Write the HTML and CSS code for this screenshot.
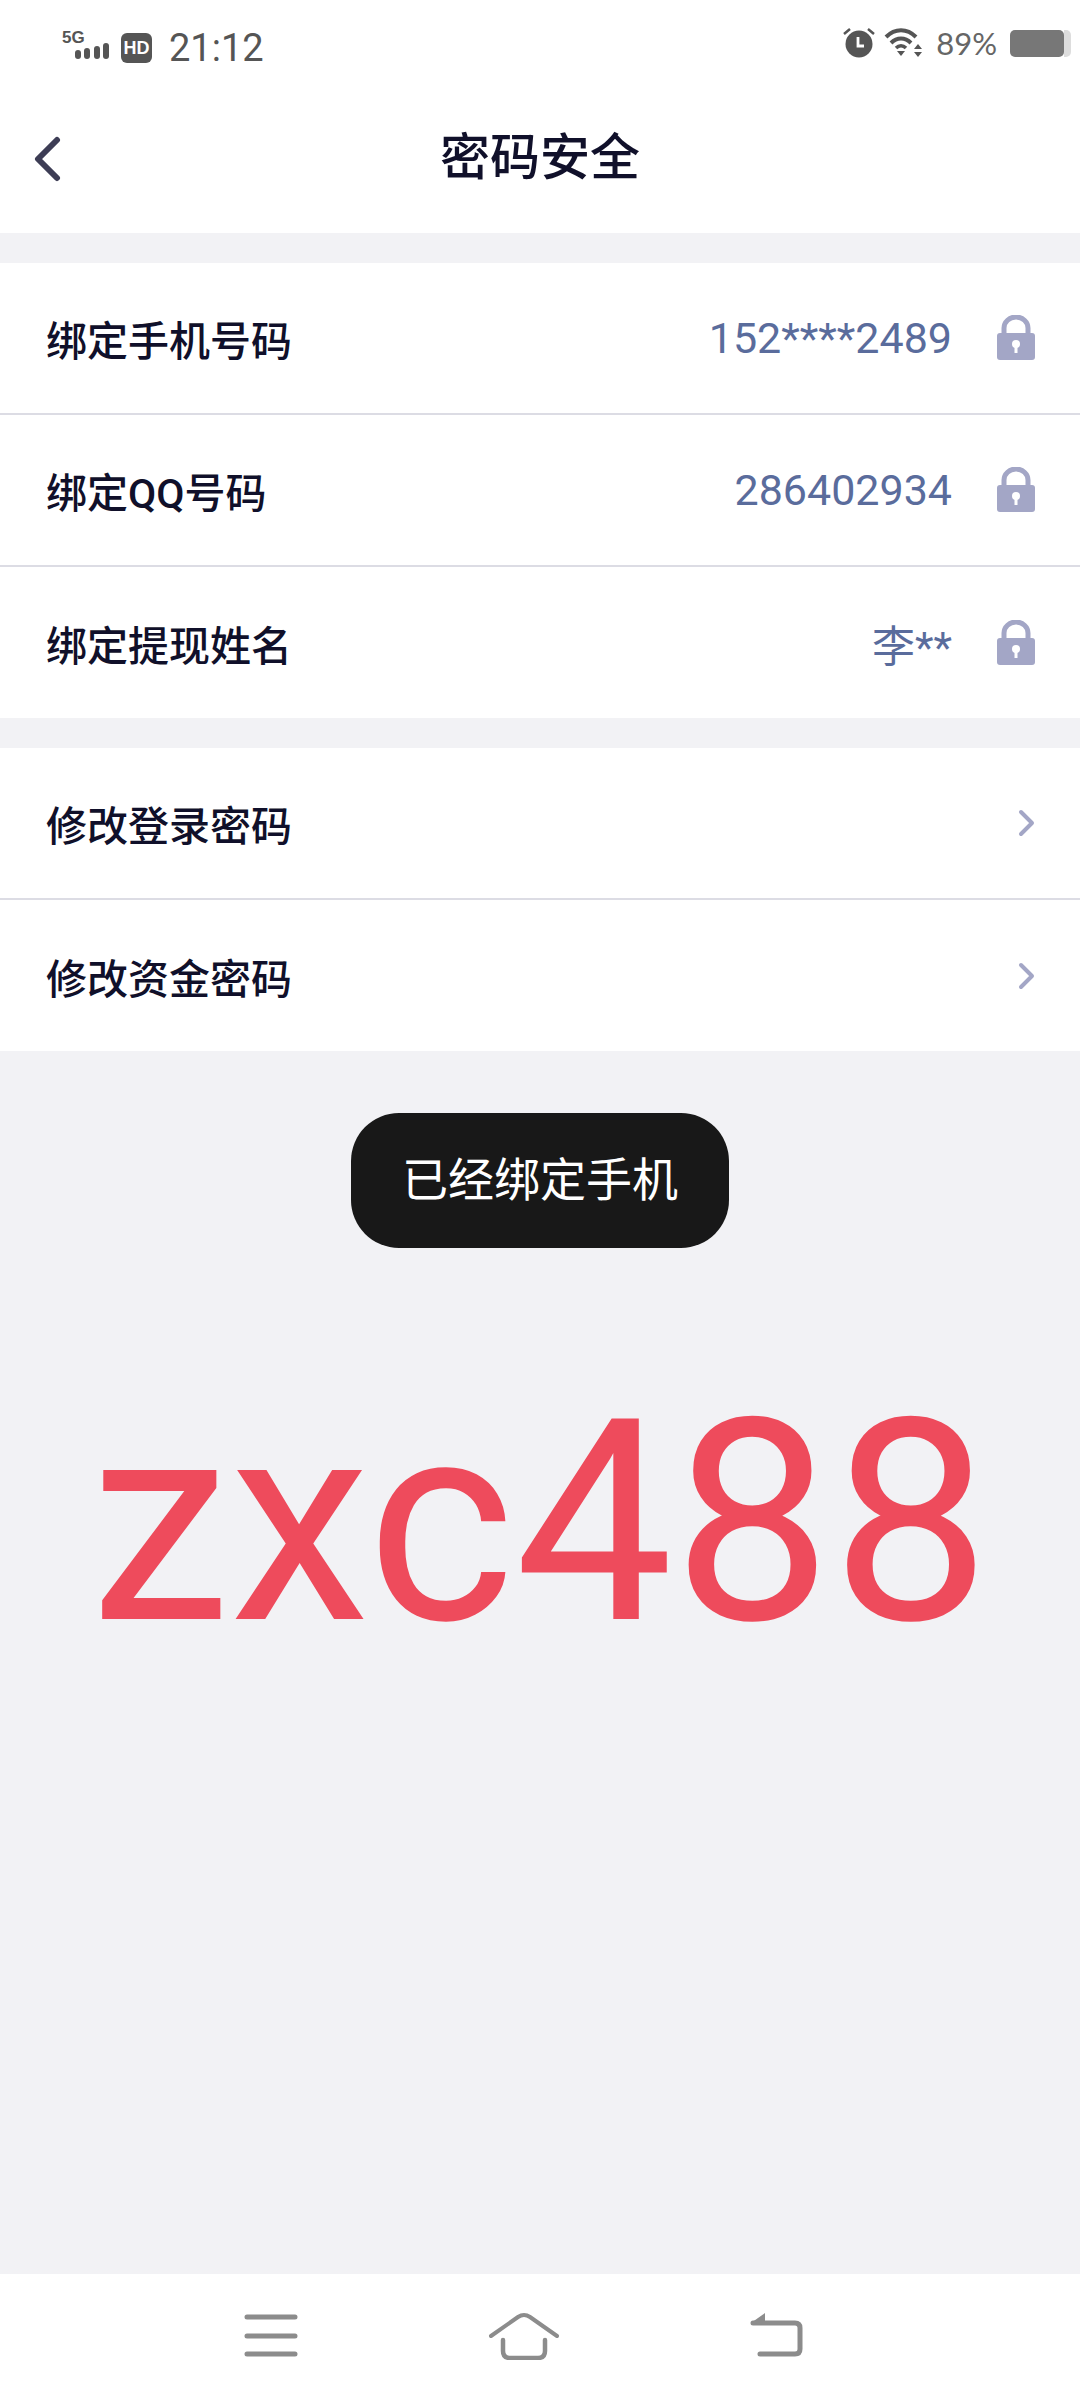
FILE: index.html
```html
<!DOCTYPE html>
<html lang="zh-CN">
<head>
    <meta charset="UTF-8">
    <meta name="viewport" content="width=device-width, initial-scale=1.0">
    <title>密码安全</title>
    <link rel="stylesheet" href="styles.css">
</head>
<body>
    <svg class="defs" width="0" height="0">
        <symbol id="lock" viewBox="0 0 40 46">
            <path d="M8 20V13a12 11 0 0 1 24 0V20" fill="none" stroke="#a3a6c6" stroke-width="5"/>
            <rect x="1" y="18" width="38" height="27" rx="3" fill="#a3a6c6"/>
            <circle cx="20" cy="29" r="4" fill="#fff"/>
            <rect x="18.5" y="30" width="3" height="8" fill="#fff"/>
        </symbol>
        <symbol id="arrow" viewBox="0 0 18 28">
            <path d="M3 3L14 14L3 25" fill="none" stroke="#a3a6c6" stroke-width="4" stroke-linecap="round" stroke-linejoin="round"/>
        </symbol>
    </svg>

    <header class="top">
        <div class="status">
            <div class="status-left">
                <svg class="signal" width="48" height="34" viewBox="0 0 48 34">
                    <text x="0" y="15" class="signal-text">5G</text>
                    <rect x="13" y="22" width="6" height="9" rx="3" fill="#555"/>
                    <rect x="22" y="20" width="6" height="11" rx="3" fill="#555"/>
                    <rect x="32" y="18" width="6" height="13" rx="3" fill="#555"/>
                    <rect x="41" y="15" width="6" height="16" rx="3" fill="#555"/>
                </svg>
                <span class="hd">HD</span>
                <span class="time">21:12</span>
            </div>
            <div class="status-right">
                <svg width="32" height="30" viewBox="0 0 32 30">
                    <path d="M1 6L7 1M31 6L25 1" stroke="#555" stroke-width="2.5"/>
                    <circle cx="16" cy="16" r="13.5" fill="#555"/>
                    <path d="M15 9V18H21" fill="none" stroke="#fff" stroke-width="2.8"/>
                </svg>
                <svg class="wifi" width="42" height="30" viewBox="0 0 42 30">
                    <path d="M2 9C11 0 23 0 32 9" fill="none" stroke="#555" stroke-width="4"/>
                    <path d="M7 15C13 9 21 9 27 15" fill="none" stroke="#555" stroke-width="4"/>
                    <path d="M12 20C15 17 19 17 22 20" fill="none" stroke="#555" stroke-width="3.5"/>
                    <path d="M13 23H21L17 28Z" fill="#555"/>
                    <path d="M34 16L38 21H30ZM30 24H38L34 29Z" fill="#555"/>
                </svg>
                <span class="percent">89%</span>
                <div class="battery"><div class="battery-level"></div></div>
            </div>
        </div>
        <div class="nav">
            <svg class="back" width="28" height="46" viewBox="0 0 28 46">
                <path d="M23 4L4 23L23 42" fill="none" stroke="#3d3d55" stroke-width="6" stroke-linecap="round" stroke-linejoin="round"/>
            </svg>
            <h1 class="title">密码安全</h1>
        </div>
    </header>

    <section class="group">
        <div class="row">
            <span class="label">绑定手机号码</span>
            <span class="value">152****2489</span>
            <svg class="lock"><use href="#lock"/></svg>
        </div>
        <div class="row">
            <span class="label">绑定QQ号码</span>
            <span class="value">286402934</span>
            <svg class="lock"><use href="#lock"/></svg>
        </div>
        <div class="row">
            <span class="label">绑定提现姓名</span>
            <span class="value">李**</span>
            <svg class="lock"><use href="#lock"/></svg>
        </div>
    </section>

    <section class="group">
        <div class="row">
            <span class="label">修改登录密码</span>
            <svg class="arrow"><use href="#arrow"/></svg>
        </div>
        <div class="row">
            <span class="label">修改资金密码</span>
            <svg class="arrow"><use href="#arrow"/></svg>
        </div>
    </section>

    <main class="content">
        <div class="toast">已经绑定手机</div>
        <div class="big-text">zxc488</div>
    </main>

    <footer class="bottom">
        <svg width="54" height="46" viewBox="0 0 54 46">
            <path d="M3 4H51M3 23H51M3 41H51" stroke="#8c8c8c" stroke-width="5" stroke-linecap="round"/>
        </svg>
        <svg width="72" height="48" viewBox="0 0 72 48">
            <path d="M3 24L30 5Q36 1 42 5L69 24" fill="none" stroke="#8c8c8c" stroke-width="4" stroke-linecap="round"/>
            <path d="M15 28V39Q15 46 22 46H50Q57 46 57 39V28" fill="none" stroke="#8c8c8c" stroke-width="4.5" stroke-linecap="round"/>
        </svg>
        <svg width="54" height="46" viewBox="0 0 54 46">
            <path d="M3 10H45Q50 10 50 15V36Q50 41 45 41H10" fill="none" stroke="#8c8c8c" stroke-width="5" stroke-linecap="round"/>
            <path d="M1 10L15 0V12Z" fill="#8c8c8c"/>
        </svg>
    </footer>
</body>
</html>
```

FILE: styles.css
```css
* {
    box-sizing: border-box;
}
html, body {
    height: 100%;
}
body {
    margin: 0;
    display: flex;
    flex-direction: column;
    background: #f2f2f5;
    font-family: Roboto, "Noto Sans CJK SC", sans-serif;
}
.defs {
    position: absolute;
}
.top {
    height: 233px;
    background: #fff;
}
.status {
    height: 80px;
    padding: 20px 16px 0 62px;
    display: flex;
    justify-content: space-between;
    align-items: flex-start;
}
.status-left, .status-right {
    display: flex;
    align-items: center;
}
.signal-text {
    font: bold 17px "Liberation Sans", sans-serif;
    fill: #555;
}
.hd {
    width: 31px;
    height: 30px;
    margin: 6px 0 0 11px;
    border-radius: 6px;
    background: #555;
    color: #fff;
    font: bold 18px/30px "Liberation Sans", sans-serif;
    text-align: center;
}
.time {
    margin: 6px 0 0 17px;
    color: #555;
    font-size: 38px;
    line-height: 44px;
}
.status-right {
    margin-top: 6px;
}
.wifi {
    margin-left: 9px;
}
.percent {
    margin-left: 10px;
    color: #666;
    font-family: Lato, sans-serif;
    font-size: 31px;
    line-height: 34px;
}
.battery {
    position: relative;
    width: 54px;
    height: 27px;
    margin-left: 13px;
    border-radius: 5px;
    background: #777;
}
.battery-level {
    position: absolute;
    top: 0;
    right: -7px;
    width: 7px;
    height: 27px;
    border-radius: 0 5px 5px 0;
    background: #ddd;
}
.nav {
    position: relative;
    height: 153px;
    display: flex;
    align-items: center;
    justify-content: center;
}
.back {
    position: absolute;
    left: 34px;
    top: 56px;
}
.title {
    margin: 0 0 8px;
    color: #10102a;
    font-size: 50px;
    font-weight: 500;
}
.group {
    margin-top: 30px;
    background: #fff;
}
.row {
    height: 152px;
    padding: 0 44px 0 46px;
    display: flex;
    align-items: center;
    border-bottom: 2px solid #dcdce4;
}
.row:last-child {
    height: 151px;
    border-bottom: 0;
}
.label {
    flex: 1;
    color: #10102a;
    font-size: 41px;
    font-weight: 500;
}
.value {
    color: #5a6c9c;
    font-size: 43px;
}
.lock {
    width: 40px;
    height: 46px;
    margin-left: 44px;
}
.arrow {
    width: 18px;
    height: 28px;
}
.content {
    flex: 1;
    display: flex;
    flex-direction: column;
    align-items: center;
}
.toast {
    width: 378px;
    height: 135px;
    margin-top: 62px;
    border-radius: 48px;
    background: #181818;
    color: #fff;
    font-size: 46px;
    line-height: 135px;
    text-align: center;
}
.big-text {
    margin-top: 110px;
    color: #ee4b5c;
    font-size: 282px;
    line-height: 330px;
    white-space: nowrap;
}
.bottom {
    height: 126px;
    padding: 0 276px 2px 244px;
    display: flex;
    justify-content: space-between;
    align-items: center;
    background: #fff;
}
```
